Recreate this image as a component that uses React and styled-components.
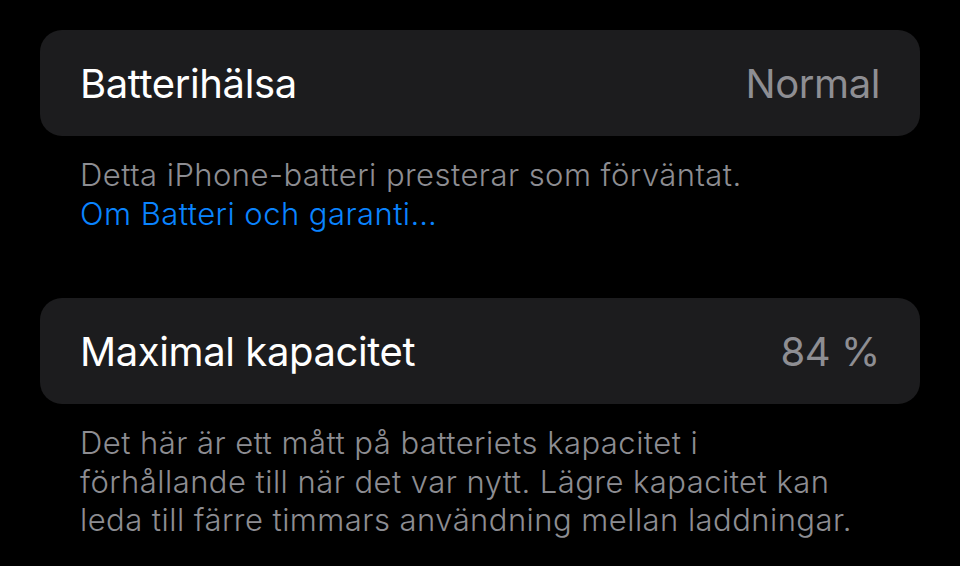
import React from "react";
import styled, { createGlobalStyle } from "styled-components";

const GlobalStyle = createGlobalStyle`
  html, body {
    margin: 0;
    background: #000;
  }
  body {
    font-family: Inter, "Noto Sans", sans-serif;
    -webkit-font-smoothing: antialiased;
  }
`;

const Page = styled.div`
  width: 960px;
  height: 566px;
  overflow: hidden;
  box-sizing: border-box;
  padding: 30px 40px 0;
  background: #000;
`;

const Group = styled.section`
  margin-bottom: ${(props) => props.gap || 0}px;
`;

const Card = styled.div`
  height: 106px;
  box-sizing: border-box;
  padding: 0 40px;
  display: flex;
  align-items: center;
  justify-content: space-between;
  background: #1c1c1e;
  border-radius: 22px;
`;

const Label = styled.span`
  color: #fff;
  font-size: 40px;
  letter-spacing: -0.4px;
`;

const Value = styled.span`
  color: #8e8e93;
  font-size: 40px;
  letter-spacing: -0.4px;
`;

const Footer = styled.p`
  margin: 0;
  padding: 20px 40px 0;
  color: #8d8d92;
  font-size: 31px;
  line-height: 38.5px;
  letter-spacing: 0.45px;
  font-weight: 300;
`;

const Link = styled.a`
  display: block;
  color: #0a84ff;
  text-decoration: none;
`;

export default function App() {
  return (
    <Page>
      <GlobalStyle />
      <Group gap={65}>
        <Card>
          <Label>Batterihälsa</Label>
          <Value>Normal</Value>
        </Card>
        <Footer>
          Detta iPhone-batteri presterar som förväntat.
          <Link href="#">Om Batteri och garanti…</Link>
        </Footer>
      </Group>
      <Group>
        <Card>
          <Label>Maximal kapacitet</Label>
          <Value>84 %</Value>
        </Card>
        <Footer>
          Det här är ett mått på batteriets kapacitet i
          <br />
          förhållande till när det var nytt. Lägre kapacitet kan
          <br />
          leda till färre timmars användning mellan laddningar.
        </Footer>
      </Group>
    </Page>
  );
}
